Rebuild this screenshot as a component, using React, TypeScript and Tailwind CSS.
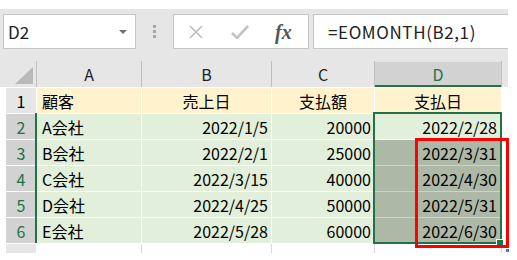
import React from "react";

const GRID = "grid grid-cols-[30px_104px_129px_102px_126px] gap-px";

const rows = [
  ["A会社", "2022/1/5", "20000", "2022/2/28"],
  ["B会社", "2022/2/1", "25000", "2022/3/31"],
  ["C会社", "2022/3/15", "40000", "2022/4/30"],
  ["D会社", "2022/4/25", "50000", "2022/5/31"],
  ["E会社", "2022/5/28", "60000", "2022/6/30"],
];

const Toolbar = () => (
  <div className="flex h-[52px] items-start pt-[5px] pl-[3px]">
    {/* name box */}
    <div className="flex h-[35px] w-[133px] items-center justify-between border border-[#c6c6c6] bg-white pl-[4px] pr-[8px]">
      <span className="text-[17px] text-[#222]">D2</span>
      <svg width="8" height="4" viewBox="0 0 8 4">
        <path d="M0 0h8L4 4z" fill="#707070" />
      </svg>
    </div>
    <div className="flex h-[35px] w-[37px] flex-col items-center justify-center gap-[2px]">
      <span className="h-[3px] w-[3px] bg-[#a8a8a8]" />
      <span className="h-[3px] w-[3px] bg-[#a8a8a8]" />
      <span className="h-[3px] w-[3px] bg-[#a8a8a8]" />
    </div>
    {/* cancel / enter / fx */}
    <div className="flex h-[35px] w-[136px] items-center border border-[#c6c6c6] bg-white pl-[14px]">
      <svg width="16" height="16" viewBox="0 0 16 16">
        <path d="M2 2l12 12M14 2L2 14" stroke="#bdbdbd" strokeWidth="1.6" />
      </svg>
      <svg className="ml-[27px]" width="18" height="14" viewBox="0 0 18 14">
        <path d="M1 8l5 5L17 1" stroke="#c4c4c4" strokeWidth="2.6" fill="none" />
      </svg>
      <span className="ml-[26px] font-['Liberation_Serif',serif] text-[20px] font-semibold italic text-[#555]">
        fx
      </span>
    </div>
    <div className="ml-[4px] flex h-[35px] flex-1 items-center border-y border-l border-[#c6c6c6] bg-white pl-[14px]">
      <span className="text-[17px] tracking-[0.6px] text-[#222]">=EOMONTH(B2,1)</span>
    </div>
  </div>
);

const HeaderRow = () => (
  <div className="flex h-[26px] pl-[6px] text-[16px] text-[#222]">
    <div className="flex w-[31px] items-end justify-end border-r border-[#c0c0c0] pb-[3px] pr-[3px]">
      <svg width="18" height="17" viewBox="0 0 18 17">
        <path d="M18 0V17H0z" fill="#b9b9b9" />
      </svg>
    </div>
    <div className="flex w-[105px] items-center justify-center border-r border-[#c0c0c0]">A</div>
    <div className="flex w-[130px] items-center justify-center border-r border-[#c0c0c0]">B</div>
    <div className="flex w-[103px] items-center justify-center border-r border-[#c0c0c0]">C</div>
    <div className="mt-px flex w-[126px] items-center justify-center border-b-2 border-[#217346] bg-[#d2d2d2] text-[#217346]">
      D
    </div>
    <div className="w-px bg-[#c0c0c0]" />
  </div>
);

export default function App() {
  return (
    <div className="relative h-[260px] w-[517px] overflow-hidden bg-white font-['Noto_Sans_CJK_JP',sans-serif] text-black">
      <div className="h-[9px]" />
      <div className="w-[508px] bg-[#e6e6e6]">
        <Toolbar />
        <HeaderRow />
      </div>

      <div className="ml-[6px] mt-px flex w-[495px] flex-col gap-px bg-white text-[16px] leading-none">
        <div className={`${GRID} h-[25px]`}>
          <div className="flex items-center justify-center bg-[#e6e6e6]">1</div>
          <div className="flex items-center bg-[#fff2cc] pl-[5px]">顧客</div>
          <div className="flex items-center justify-center bg-[#fff2cc]">売上日</div>
          <div className="flex items-center justify-center bg-[#fff2cc]">支払額</div>
          <div className="flex items-center justify-center bg-[#fff2cc]">支払日</div>
        </div>
        {rows.map((r, i) => (
          <div key={r[0]} className={`${GRID} h-[25px]`}>
            <div className="flex items-center justify-center bg-[#d2d2d2] text-[#217346]">{i + 2}</div>
            <div className="flex items-center bg-[#e2efda] pl-[5px]">{r[0]}</div>
            <div className="flex items-center justify-end bg-[#e2efda] pr-[3px]">{r[1]}</div>
            <div className="flex items-center justify-end bg-[#e2efda] pr-[3px]">{r[2]}</div>
            {i === 0 ? (
              <div className="flex items-center justify-end bg-[#e2efda] pr-[4px]">{r[3]}</div>
            ) : (
              <div
                className={`flex items-center justify-end bg-[#aeb8a6] pr-[4px] ${
                  i > 1 ? "shadow-[0_-1px_0_#cfd2cc]" : ""
                }`}
              >
                {r[3]}
              </div>
            )}
          </div>
        ))}
        <div className={`${GRID} h-[9px]`}>
          <div className="bg-[#e6e6e6]" />
          <div className="shadow-[1px_0_0_#d9d9d9]" />
          <div className="shadow-[1px_0_0_#d9d9d9]" />
          <div className="shadow-[1px_0_0_#d9d9d9]" />
          <div className="shadow-[1px_0_0_#d9d9d9]" />
        </div>
      </div>

      {/* selection: row header edge, range border, fill handle */}
      <div className="absolute left-[35px] top-[113px] h-[130px] w-[2px] bg-[#217346]" />
      <div className="absolute left-[373px] top-[112px] h-[132px] w-[129px] border-2 border-[#217346]" />
      <div className="absolute left-[496px] top-[239px] h-[8px] w-[8px] border border-white bg-[#217346]" />
      <div className="absolute left-[506px] top-[249px] h-[3px] w-[3px] bg-[#3b7ddd]" />

      {/* annotation */}
      <div className="absolute left-[415px] top-[138px] h-[110px] w-[94px] border-[3px] border-[#ff0000]" />
    </div>
  );
}
